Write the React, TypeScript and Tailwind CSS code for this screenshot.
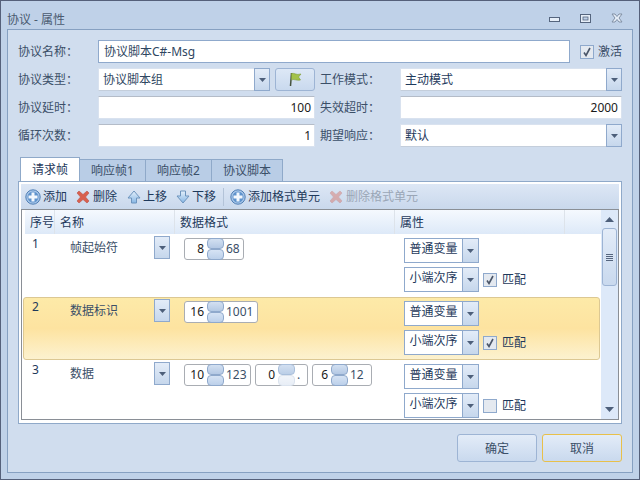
import React from "react";

function Arrow({ className = "" }: { className?: string }) {
  return (
    <svg width="7" height="4" viewBox="0 0 7 4" className={className}>
      <path d="M0 0H7L3.5 4Z" fill="#4d5f7a" />
    </svg>
  );
}

function DropBtn({ className = "" }: { className?: string }) {
  return (
    <div className={`flex items-center justify-center border border-[#8fa9cc] bg-gradient-to-b from-[#e3ecf8] to-[#c6d7ec] ${className}`}>
      <Arrow />
    </div>
  );
}

function Field({ children, right = false, className = "", active = false }: { children: React.ReactNode; right?: boolean; className?: string; active?: boolean }) {
  return (
    <div className={`h-[23px] flex items-center bg-white border ${active ? "border-[#8fa9cc]" : "border-[#d9e2ef] border-t-[#b4bcc8]"} ${right ? "justify-end pr-[3px]" : "pl-[4px]"} text-[#1a1a1a] ${className}`}>
      {children}
    </div>
  );
}

function Combo({ children, className = "" }: { children: React.ReactNode; className?: string }) {
  return (
    <div className={`h-[23px] flex bg-white ${className}`}>
      <div className="flex-1 flex items-center pl-[4px] text-[#1e395b] border border-r-0 border-[#d9e2ef] border-b-[#c4cedb]">{children}</div>
      <DropBtn className="w-[16px]" />
    </div>
  );
}

function Label({ children, className = "" }: { children: React.ReactNode; className?: string }) {
  return <div className={`w-[80px] shrink-0 whitespace-nowrap text-[#3b4f68] ${className}`}>{children}</div>;
}

function Check({ checked }: { checked: boolean }) {
  return (
    <div className="w-[14px] h-[14px] shrink-0 border border-[#8fa9cc] bg-[#e4e9f0] flex items-center justify-center">
      {checked && (
        <svg width="10" height="10" viewBox="0 0 10 10">
          <path d="M2 5.5L4 8.5L8 1" fill="none" stroke="#4a5568" strokeWidth="1.6" />
        </svg>
      )}
    </div>
  );
}

function PlusIcon() {
  return (
    <svg width="16" height="16" viewBox="0 0 16 16" className="shrink-0">
      <circle cx="8" cy="8" r="7.2" fill="#a9c6e8" stroke="#4f7fb5" />
      <circle cx="8" cy="8" r="5.5" fill="#5f93cc" />
      <path d="M6.5 3.5h3v3h3v3h-3v3h-3v-3h-3v-3h3z" fill="#f2f7fd" />
    </svg>
  );
}

function XIcon({ dim = false }: { dim?: boolean }) {
  return (
    <svg width="14" height="14" viewBox="0 0 14 14" className={`shrink-0 ${dim ? "opacity-40" : ""}`}>
      <path d="M1 3L3 1L7 4.5L11 1L13 3L9.5 7L13 11L11 13L7 9.5L3 13L1 11L4.5 7Z" fill="#d9604e" stroke="#b9524a" strokeWidth="0.6" />
    </svg>
  );
}

function UpIcon() {
  return (
    <svg width="14" height="14" viewBox="0 0 14 14" className="shrink-0">
      <defs>
        <linearGradient id="up" x1="0" y1="0" x2="0" y2="1">
          <stop offset="0" stopColor="#e4f0fb" />
          <stop offset="1" stopColor="#86b6e4" />
        </linearGradient>
      </defs>
      <path d="M7 1L13 8H9.5V13H4.5V8H1Z" fill="url(#up)" stroke="#6d94bd" />
    </svg>
  );
}

function DownIcon() {
  return (
    <svg width="14" height="14" viewBox="0 0 14 14" className="shrink-0">
      <defs>
        <linearGradient id="down" x1="0" y1="0" x2="0" y2="1">
          <stop offset="0" stopColor="#e4f0fb" />
          <stop offset="1" stopColor="#86b6e4" />
        </linearGradient>
      </defs>
      <path d="M7 13L13 6H9.5V1H4.5V6H1Z" fill="url(#down)" stroke="#6d94bd" />
    </svg>
  );
}

function Spin({ a, b, w, fade = false, aw }: { a: string; b: string; w: string; fade?: boolean; aw: string }) {
  return (
    <div className={`h-[22px] flex items-center border border-[#a9adb3] rounded-[3px] bg-white ${w}`}>
      <div className={`${aw} text-right pr-[3px] text-[#1a1a1a]`}>{a}</div>
      <div className="w-[17px] h-[22px] flex flex-col shrink-0">
        <div className={`h-[11px] rounded-[4px] border ${fade ? "border-[#a9bfdb] from-[#d3e0f1] to-[#bccfe7]" : "border-[#8fa9cc] from-[#d3e0f1] to-[#b4c9e4]"} bg-gradient-to-b`} />
        <div className={`h-[11px] rounded-[4px] border ${fade ? "border-[#dbe3ee] from-[#f2f5fa] to-[#e8eef6]" : "border-[#8fa9cc] from-[#d6e3f4] to-[#bcd0ea]"} bg-gradient-to-b`} />
      </div>
      <div className="pl-[2px] text-[#3b4f68] whitespace-nowrap">{b}</div>
    </div>
  );
}

function SmallCombo({ text }: { text: string }) {
  return (
    <div className="w-[75px] h-[25px] flex border border-[#8fa9cc] bg-white">
      <div className="w-[58px] flex items-center justify-center pb-[3px] text-[#1e395b] border-r border-[#8fa9cc]">{text}</div>
      <div className="flex-1 flex items-center justify-center bg-gradient-to-b from-[#e3ecf8] to-[#c6d7ec]">
        <Arrow />
      </div>
    </div>
  );
}

function Row({ idx, name, spins, checked, hi = false }: { idx: string; name: string; spins: React.ReactNode; checked: boolean; hi?: boolean }) {
  return (
    <div className={`h-[63px] ml-[1px] mr-[1px] flex shrink-0 rounded-[3px] border ${hi ? "border-[#dcc893] bg-gradient-to-b from-[#fdeaa8] via-[#fde3a0] to-[#fcf2cf]" : "border-transparent"}`}>
      <div className="w-[46px] pl-[8px] pt-[1px] text-[#1e395b]">{idx}</div>
      <div className="w-[84px] pt-[5px] text-[#3b4f68]">{name}</div>
      <DropBtn className="w-[16px] h-[23px] mt-[1px]" />
      <div className="w-[14px]" />
      <div className="w-[220px] flex gap-[4px] pt-[3px] items-start">{spins}</div>
      <div className="flex flex-col gap-[4px] pt-[3px]">
        <SmallCombo text="普通变量" />
        <div className="flex items-center">
          <SmallCombo text="小端次序" />
          <div className="ml-[4px]"><Check checked={checked} /></div>
          <div className="ml-[5px] text-[#1e395b]">匹配</div>
        </div>
      </div>
    </div>
  );
}

function Th({ w, children }: { w: string; children?: React.ReactNode }) {
  return <div className={`${w} h-full flex items-center pl-[5px] pt-[2px] border-r border-[#dde3ea] text-[#1e395b]`}>{children}</div>;
}

export default function App() {
  return (
    <div
      className="w-[640px] h-[480px] flex flex-col overflow-hidden border border-[#55607a] bg-[#bfd1e8] text-[12px] leading-[16px]"
      style={{ fontFamily: '"Noto Sans","Noto Sans CJK SC",sans-serif' }}
    >
      <div className="h-[28px] shrink-0 flex items-center justify-between pl-[6px] pr-[16px] text-[#4a5a70]">
        <span className="pt-[9px]">协议 - 属性</span>
        <div className="flex items-center gap-[20px] pt-[6px]">
          <svg width="11" height="6" viewBox="0 0 11 6" className="mt-[4px]"><rect x="0.5" y="0.5" width="10" height="4" fill="#e6eef8" stroke="#55657e" /></svg>
          <svg width="11" height="9" viewBox="0 0 11 9"><rect x="0.5" y="0.5" width="10" height="8" fill="#e6eef8" stroke="#55657e" /><rect x="3" y="3" width="5" height="3" fill="#bfd1e8" stroke="#55657e" strokeWidth="0.8" /></svg>
          <svg width="12" height="10" viewBox="0 0 12 10"><path d="M1 1h3l2 2.5L8 1h3L8 5l3 4H8L6 6.5 4 9H1l3-4z" fill="#e6eef8" stroke="#8190a5" /></svg>
        </div>
      </div>

      <div className="flex-1 mx-[6px] mb-[6px] border border-[#86a0c1] bg-[#d0ddee] pt-[10px] px-[10px] flex flex-col">
        <div className="flex flex-col gap-[5px]">
          <div className="flex items-center">
            <Label>协议名称：</Label>
            <Field active className="w-[472px] pl-[5px]"><span className="text-[#2f4661]">协议脚本C#-Msg</span></Field>
            <div className="ml-[10px]"><Check checked /></div>
            <span className="ml-[4px] text-[#3b4f68] whitespace-nowrap">激活</span>
          </div>
          <div className="flex items-center">
            <Label>协议类型：</Label>
            <Combo className="w-[172px]"><span className="text-[#2f4661]">协议脚本组</span></Combo>
            <div className="ml-[5px] w-[40px] h-[23px] border border-[#9db4d4] rounded-[3px] bg-gradient-to-b from-[#dde8f6] to-[#c9d9ee] flex items-center justify-center">
              <svg width="14" height="15" viewBox="0 0 14 15">
                <path d="M3.5 1L2.5 14" stroke="#46533f" strokeWidth="1.5" />
                <path d="M3.5 1.5C6 0.5 8 3.5 13 2L10.5 5L12.5 8C8 9 6 6.5 3.5 8Z" fill="#a3c24a" stroke="#7d9a35" strokeWidth="0.6" />
              </svg>
            </div>
            <Label className="ml-[5px]">工作模式：</Label>
            <Combo className="w-[222px]">主动模式</Combo>
          </div>
          <div className="flex items-center">
            <Label>协议延时：</Label>
            <Field right className="w-[217px]">100</Field>
            <Label className="ml-[5px]">失效超时：</Label>
            <Field right className="w-[222px]">2000</Field>
          </div>
          <div className="flex items-center">
            <Label>循环次数：</Label>
            <Field right className="w-[217px]">1</Field>
            <Label className="ml-[5px]">期望响应：</Label>
            <Combo className="w-[222px]">默认</Combo>
          </div>
        </div>

        <div className="mt-[10px] h-[24px] flex items-end pl-[2px] relative z-10">
          <div className="w-[60px] h-[24px] pt-[1px] bg-white border border-b-0 border-[#8fa9c9] flex items-center justify-center text-[#1e395b]">请求帧</div>
          {[["w-[66px]", "响应帧1"], ["w-[66px]", "响应帧2"], ["w-[71px]", "协议脚本"]].map(([w, t]) => (
            <div key={t} className={`${w} h-[22px] pt-[1px] bg-[#b9cde6] border border-l-0 border-b-0 border-[#8fa9c9] flex items-center justify-center text-[#3b4f68]`}>{t}</div>
          ))}
        </div>

        <div className="h-[243px] border border-[#8fa9c9] bg-white p-[2px] pb-[3px] flex flex-col">
          <div className="h-[25px] shrink-0 flex items-center bg-gradient-to-b from-[#dde7f5] to-[#c9d8ec] pl-[4px] text-[#1e395b]">
            <PlusIcon /><span className="ml-[2px]">添加</span>
            <span className="ml-[9px]"><XIcon /></span><span className="ml-[3px]">删除</span>
            <span className="ml-[10px]"><UpIcon /></span><span className="ml-[2px]">上移</span>
            <span className="ml-[9px]"><DownIcon /></span><span className="ml-[2px]">下移</span>
            <div className="ml-[7px] w-px h-[18px] bg-[#b3c3d8]" />
            <span className="ml-[6px]"><PlusIcon /></span><span className="ml-[2px]">添加格式单元</span>
            <span className="ml-[9px]"><XIcon dim /></span><span className="ml-[3px] text-[#9aa6b6]">删除格式单元</span>
          </div>
          <div className="flex-1 min-h-0 border border-[#8a8f96] flex bg-white">
            <div className="flex-1 min-w-0 flex flex-col overflow-hidden">
              <div className="h-[24px] ml-[3px] shrink-0 flex bg-gradient-to-b from-[#f5f9fe] to-[#dde9f8]">
                <Th w="w-[30px]">序号</Th>
                <Th w="w-[120px]">名称</Th>
                <Th w="w-[220px]">数据格式</Th>
                <Th w="w-[170px]">属性</Th>
                <div className="flex-1" />
              </div>
              <Row idx="1" name="帧起始符" checked spins={<Spin a="8" b="68" w="w-[60px]" aw="w-[22px]" />} />
              <Row idx="2" name="数据标识" checked hi spins={<Spin a="16" b="1001" w="w-[74px]" aw="w-[22px]" />} />
              <Row
                idx="3"
                name="数据"
                checked={false}
                spins={
                  <>
                    <Spin a="10" b="123" w="w-[67px]" aw="w-[22px]" />
                    <Spin a="0" b="." w="w-[53px]" aw="w-[22px]" fade />
                    <Spin a="6" b="12" w="w-[60px]" aw="w-[18px]" />
                  </>
                }
              />
            </div>
            <div className="w-[17px] shrink-0 bg-[#dde9f9] flex flex-col items-center">
              <svg width="9" height="5" viewBox="0 0 9 5" className="mt-[7px]"><path d="M0 5H9L4.5 0Z" fill="#4d5f7a" /></svg>
              <div className="mt-[6px] w-[15px] h-[58px] border border-[#9db4d4] rounded-[3px] bg-gradient-to-b from-[#e3ecf8] to-[#c9d9ee] flex flex-col items-center justify-center gap-[1px]">
                <div className="w-[7px] h-px bg-[#55657e]" />
                <div className="w-[7px] h-px bg-[#55657e]" />
                <div className="w-[7px] h-px bg-[#55657e]" />
                <div className="w-[7px] h-px bg-[#55657e]" />
              </div>
              <div className="flex-1" />
              <svg width="9" height="5" viewBox="0 0 9 5" className="mb-[7px]"><path d="M0 0H9L4.5 5Z" fill="#4d5f7a" /></svg>
            </div>
          </div>
        </div>

        <div className="mt-[10px] flex justify-end gap-[5px]">
          <div className="w-[80px] h-[28px] pt-[2px] rounded-[3px] border border-[#9db4d4] bg-gradient-to-b from-[#e3ecf8] to-[#c9d9ee] flex items-center justify-center text-[#3b4f68]">确定</div>
          <div className="w-[80px] h-[28px] pt-[2px] rounded-[3px] border border-[#e8c04a] bg-gradient-to-b from-[#e3ecf8] to-[#c9d9ee] flex items-center justify-center text-[#3b4f68]">取消</div>
        </div>
      </div>
    </div>
  );
}
